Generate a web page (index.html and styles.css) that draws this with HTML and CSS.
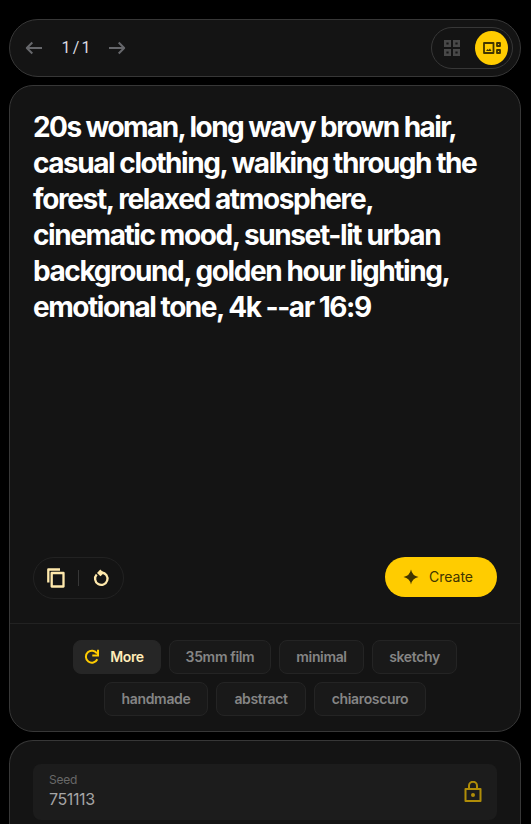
FILE: index.html
```html
<!DOCTYPE html>
<html>
	<head>
		<meta charset="utf-8" />
		<title>Create</title>
		<link rel="stylesheet" href="styles.css">
	</head>
	<body>
		<div class="toolbar">
			<div class="pager">
				<svg width="24" height="24" viewBox="0 0 24 24"><path d="M20 12H5M10.300 6.500L4.800 12l5.500 5.500"/></svg>
				<span>1 / 1</span>
				<svg width="24" height="24" viewBox="0 0 24 24"><path d="M4 12h15M13.700 6.500l5.500 5.500-5.500 5.500"/></svg>
			</div>
			<div class="views">
				<div class="view">
					<svg width="18" height="18" viewBox="0 0 18 18"><path d="M2.200 2.200h4.600v4.600H2.200zM11.200 2.200h4.600v4.600h-4.600zM2.200 11.200h4.600v4.600H2.200zM11.200 11.200h4.600v4.600h-4.600z"/></svg>
				</div>
				<div class="view active">
					<svg width="20" height="14" viewBox="0 0 20 14"><path d="M2 2h9.500v10H2zM15 2h3v3h-3zM15 9h3v3h-3z"/><path class="solid" d="M4 10l1.500-2 1 1L8 7.500l1.500 2.500z"/></svg>
				</div>
			</div>
		</div>
		<div class="card">
			<div class="prompt">
				<p class="l1">20s woman, long wavy brown hair,</p>
				<p class="l2">casual clothing, walking through the</p>
				<p class="l3">forest, relaxed atmosphere,</p>
				<p class="l4">cinematic mood, sunset-lit urban</p>
				<p class="l5">background, golden hour lighting,</p>
				<p class="l6">emotional tone, 4k --ar 16:9</p>
			</div>
			<div class="actions">
				<div class="tools">
					<svg width="20" height="22" viewBox="0 0 20 22"><path d="M14 2.500H2.300V15.500M5.700 6h11.800v13.500H5.700z"/></svg>
					<i></i>
					<svg width="18" height="20" viewBox="0 0 18 20"><path d="M9.800 4.500A6.200 6.200 0 1 1 4.700 6.500"/><path class="solid" d="M8.300 1.400l3.600 3.500-3.400 3.300L5 4.900z"/></svg>
				</div>
				<button class="create">
					<svg width="16" height="16" viewBox="0 0 16 16"><path d="M8 .5Q9.200 6.800 15.500 8 9.200 9.200 8 15.500 6.800 9.200.5 8 6.800 6.800 8 .5z"/></svg>
					<span>Create</span>
				</button>
			</div>
			<div class="chips">
				<div class="row">
					<span class="chip more"><svg width="16" height="16" viewBox="0 0 16 16"><path d="M13 4.600A6 6 0 1 0 13.300 10.300"/><path d="M14 .8v5.700H8.300"/></svg><b>More</b></span>
					<span class="chip film">35mm film</span>
					<span class="chip minimal">minimal</span>
					<span class="chip sketchy">sketchy</span>
				</div>
				<div class="row">
					<span class="chip handmade">handmade</span>
					<span class="chip abstract">abstract</span>
					<span class="chip chiaroscuro">chiaroscuro</span>
				</div>
			</div>
		</div>
		<div class="settings">
			<div class="seed">
				<div class="field">
					<label>Seed</label>
					<p>751113</p>
				</div>
				<svg width="18" height="22" viewBox="0 0 18 22"><path d="M1.500 8h15v12h-15zM5 8V4.800a4 4 0 0 1 8 0V8"/><circle cx="9" cy="14" r="2"/></svg>
			</div>
		</div>
	</body>
</html>
```

FILE: styles.css
```css
*{margin: 0;padding: 0;box-sizing: border-box;}
body{padding: 19px 10px 0 9px;background: #000;font-family: Inter,sans-serif;}
svg{display: block;flex: none;fill: none;stroke-width: 2;stroke-linejoin: round;}
.toolbar{height: 58px;border: 1px solid #373737;border-radius: 29px;background: #141414;display: flex;justify-content: space-between;align-items: center;padding: 0 7px 0 12px;}
.pager{display: flex;align-items: center;color: #dcdce0;font-family: Roboto,sans-serif;font-size: 16px;letter-spacing: -.900px;}
.pager svg{stroke: #66676b;}
.pager span{width: 59px;text-align: center;padding-bottom: 2px;}
.views{width: 82px;height: 42px;border: 1px solid #373737;border-radius: 21px;display: flex;align-items: center;padding: 0 3px;gap: 6px;}
.view{width: 34px;height: 34px;border-radius: 50%;display: flex;align-items: center;justify-content: center;stroke: #484848;}
.view:first-child svg{stroke-width: 2.400;stroke-linejoin: miter;}
.view.active{width: 33px;background: #fc0;stroke: #413500;}
.view.active svg{stroke-width: 1.800;}
.view .solid{fill: #413500;stroke: none;}

.card{height: 647px;margin-top: 8px;border: 1px solid #373737;border-radius: 24px;background: #141414;display: flex;flex-direction: column;}
.prompt{flex: 1;padding: 23px 0 0 23px;color: #fff;font-size: 28px;line-height: 36px;font-weight: 700;white-space: nowrap;}
.l1{letter-spacing: -1.570px;}
.l2{letter-spacing: -1.460px;}
.l3{letter-spacing: -1.380px;}
.l4,.l5{letter-spacing: -1.410px;}
.l6{letter-spacing: -1.470px;}
.actions{height: 66px;padding: 0 23px;display: flex;justify-content: space-between;align-items: flex-start;}
.tools{width: 91px;height: 42px;border: 1px solid #222;border-radius: 21px;display: flex;align-items: center;padding-left: 12px;stroke: #ffe9ac;}
.tools svg{stroke-width: 2.300;}
.tools i{width: 1px;height: 16px;background: #373737;margin: 0 13px 0 12px;}
.tools .solid{fill: #ffe9ac;stroke: none;}
.create{width: 112px;height: 40px;border: 0;border-radius: 20px;background: #fc0;color: #413500;display: flex;align-items: center;padding-left: 18px;gap: 10px;font: 400 14px Inter,sans-serif;}
.create span{padding-bottom: 1px;}
.create svg{fill: #413500;}
.chips{height: 108px;border-top: 1px solid #222;padding-top: 16px;}
.row{display: flex;justify-content: center;gap: 8px;margin-bottom: 8px;}
.chip{height: 34px;border: 1px solid #242424;border-radius: 8px;background: #191919;color: #858585;display: flex;align-items: center;justify-content: center;padding-bottom: 1px;font-size: 14px;font-weight: 600;letter-spacing: -.350px;white-space: nowrap;}
.more{width: 88px;background: #262626;border-color: #262626;color: #ffecb8;gap: 10px;padding-right: 6px;}
.more b{font-weight: 600;}
.more svg{stroke: #fc0;stroke-linejoin: miter;}
.film{width: 102px;}
.minimal,.sketchy{width: 85px;}
.handmade{width: 104px;}
.abstract{width: 90px;}
.chiaroscuro{width: 112px;}

.settings{height: 84px;margin-top: 8px;border: 1px solid #373737;border-bottom: 0;border-radius: 24px 24px 0 0;background: #141414;padding: 23px 23px 0;}
.seed{height: 56px;border-radius: 8px;background: #1c1c1c;display: flex;align-items: center;justify-content: space-between;padding: 0 15px 0 16px;color: #a5a5a5;}
.field{padding-bottom: 1px;}
.seed label{display: block;font-size: 12px;line-height: 16px;letter-spacing: -.200px;color: #686868;}
.seed p{font-size: 16px;line-height: 23px;letter-spacing: -.400px;}
.seed svg{stroke: #b08d08;}
.seed circle{fill: #b08d08;stroke: none;}
```
